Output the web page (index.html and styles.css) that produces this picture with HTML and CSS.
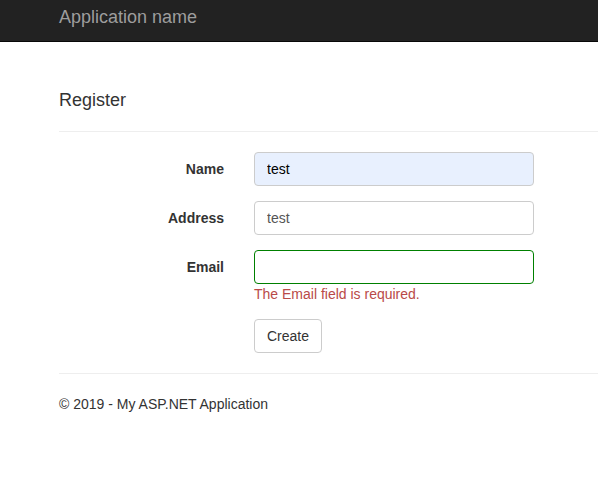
FILE: index.html
```html
<!DOCTYPE html>
<html lang="en">
<head>
<meta charset="utf-8">
<title>Register - My ASP.NET Application</title>
<link rel="stylesheet" href="styles.css">
</head>
<body>
<nav class="navbar">
  <a class="navbar-brand" href="#">Application name</a>
</nav>
<div class="container body-content">
  <h4 class="title">Register</h4>
  <hr class="rule">
  <form class="form-horizontal">
    <div class="form-group">
      <label class="control-label" for="Name">Name</label>
      <div class="field">
        <input class="form-control autofilled" id="Name" type="text" value="test">
      </div>
    </div>
    <div class="form-group">
      <label class="control-label" for="Address">Address</label>
      <div class="field">
        <input class="form-control" id="Address" type="text" value="test">
      </div>
    </div>
    <div class="form-group">
      <label class="control-label" for="Email">Email</label>
      <div class="field">
        <input class="form-control input-valid" id="Email" type="text" value="">
        <span class="field-validation-error">The Email field is required.</span>
      </div>
    </div>
    <div class="form-group">
      <div class="spacer"></div>
      <div class="field">
        <button type="button" class="btn btn-default">Create</button>
      </div>
    </div>
  </form>
  <hr class="rule footer-rule">
  <footer class="footer">
    <p>&copy; 2019 - My ASP.NET Application</p>
  </footer>
</div>
</body>
</html>
```

FILE: styles.css
```css
* {
  box-sizing: border-box;
}

html, body {
  margin: 0;
  padding: 0;
}

body {
  font-family: "Liberation Sans", Arial, Helvetica, sans-serif;
  font-size: 14px;
  line-height: 20px;
  color: #333333;
  background: #ffffff;
}

.navbar {
  height: 42px;
  background: #222222;
  border-bottom: 1px solid #080808;
  padding-left: 59px;
}

.navbar-brand {
  display: inline-block;
  padding-top: 7px;
  font-size: 18px;
  line-height: 20px;
  color: #9d9d9d;
  text-decoration: none;
}

.container {
  padding-left: 59px;
  padding-top: 39px;
}

.title {
  margin: 10px 0 0 0;
  font-size: 18px;
  font-weight: 500;
  line-height: 19.8px;
  color: #333333;
}

.rule {
  margin: 20px 0 20px 0;
  border: 0;
  border-top: 1px solid #eeeeee;
  height: 0;
}

.form-horizontal {
  margin: 0;
}

.form-group {
  display: grid;
  grid-template-columns: 165px 280px;
  column-gap: 30px;
  margin-bottom: 15px;
}

.form-group:last-child {
  margin-bottom: 0;
}

.control-label {
  text-align: right;
  font-weight: bold;
  padding-top: 7px;
}

.form-control {
  display: block;
  width: 280px;
  height: 34px;
  padding: 6px 12px;
  font-family: inherit;
  font-size: 14px;
  line-height: 20px;
  color: #555555;
  background: #ffffff;
  border: 1px solid #cccccc;
  border-radius: 4px;
  outline: none;
}

.form-control.autofilled {
  background: #e8f0fe;
  color: #000000;
}

.form-control.input-valid {
  border-color: #008000;
}

.field-validation-error {
  display: block;
  color: #b94a48;
}

.btn {
  display: inline-block;
  height: 34px;
  padding: 6px 12px;
  font-family: inherit;
  font-size: 14px;
  line-height: 20px;
  border-radius: 4px;
  cursor: pointer;
}

.btn-default {
  color: #333333;
  background: #ffffff;
  border: 1px solid #cccccc;
}

.footer p {
  margin: 0;
}
```
